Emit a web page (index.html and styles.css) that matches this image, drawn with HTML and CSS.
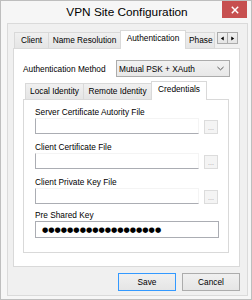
FILE: index.html
```html
<!DOCTYPE html>
<html lang="en">
<head>
	<title>VPN Site Configuration</title>
	<meta charset="utf-8">
	<link rel="stylesheet" href="styles.css">
</head>
<body>
	<section class="window">
		<header class="titleBar">
			<span class="titleText">VPN Site Configuration</span>
			<span class="closeButton">
				<svg viewBox="0 0 10 10" width="8" height="8"><line x1="1" y1="1" x2="9" y2="9"/><line x1="9" y1="1" x2="1" y2="9"/></svg>
			</span>
		</header>

		<section class="clientArea">
			<section class="tabControl">
				<div class="tabStrip">
					<div class="tab" style="width:35px;">Client</div>
					<div class="tab" style="width:73px;">Name Resolution</div>
					<div class="tab tab_selected" style="width:66px;">Authentication</div>
					<div class="tab tab_clipped" style="width:30px;">Phase</div>
					<div class="tabScroller">
						<span class="tabScroller_button"><svg viewBox="0 0 6 6" width="5" height="5"><polygon points="4.5,0.5 1,3 4.5,5.5"/></svg></span>
						<span class="tabScroller_button"><svg viewBox="0 0 6 6" width="5" height="5"><polygon points="1.5,0.5 5,3 1.5,5.5"/></svg></span>
					</div>
				</div>

				<div class="tabPanel mainPanel">
					<div class="methodRow">
						<span class="methodLabel">Authentication Method</span>
						<div class="comboBox">
							<span>Mutual PSK + XAuth</span>
							<svg viewBox="0 0 8 5" width="7" height="5"><polyline points="0.5,0.8 4,4 7.5,0.8"/></svg>
						</div>
					</div>

					<section class="tabControl innerTabs">
						<div class="tabStrip">
							<div class="tab" style="width:59px;">Local Identity</div>
							<div class="tab" style="width:69px;">Remote Identity</div>
							<div class="tab tab_selected" style="width:56px;">Credentials</div>
						</div>
						<div class="tabPanel credentialsPanel">
							<div class="field">
								<label class="fieldLabel">Server Certificate Autority File</label>
								<div class="fieldRow">
									<div class="textBox textBox_disabled"></div>
									<span class="browseButton">...</span>
								</div>
							</div>
							<div class="field">
								<label class="fieldLabel">Client Certificate File</label>
								<div class="fieldRow">
									<div class="textBox textBox_disabled"></div>
									<span class="browseButton">...</span>
								</div>
							</div>
							<div class="field">
								<label class="fieldLabel">Client Private Key File</label>
								<div class="fieldRow">
									<div class="textBox textBox_disabled"></div>
									<span class="browseButton">...</span>
								</div>
							</div>
							<div class="field field_key">
								<label class="fieldLabel">Pre Shared Key</label>
								<div class="fieldRow">
									<div class="textBox textBox_key"><span class="keyDots">●●●●●●●●●●●●●●●●●●●</span></div>
								</div>
							</div>
						</div>
					</section>
				</div>
			</section>

			<footer class="dialogButtons">
				<span class="dialogButton dialogButton_default">Save</span>
				<span class="dialogButton">Cancel</span>
			</footer>
		</section>
	</section>
</body>
</html>
```

FILE: styles.css
```css
html, body{ margin:0; padding:0; }
body{ width:252px; height:300px; overflow:hidden; font-family:"Liberation Sans", Arial, sans-serif; font-size:8.3px; color:rgb(0,0,0); }

.window{
	box-sizing:border-box;
	width:252px; height:300px;
	border:1px solid rgb(190,190,190);
	background-color:rgb(246,246,246);
	display:flex; flex-direction:column;
}

/* title bar */
.titleBar{
	height:22px; flex:none;
	display:grid; grid-template-columns:1fr auto 1fr; align-items:start;
}
.titleText{ grid-column:2; font-size:11.8px; line-height:22px; padding-left:2px; }
.closeButton{
	grid-column:3; justify-self:end;
	width:25px; height:17px; margin-right:4px;
	background-color:rgb(199,80,80);
	display:flex; align-items:center; justify-content:center;
}
.closeButton svg{ stroke:rgb(255,255,255); stroke-width:1.8; }

/* client area */
.clientArea{
	flex:1;
	margin:0 3px 3px 6px;
	border:1px solid rgb(218,218,218);
	background-color:rgb(240,240,240);
	display:flex; flex-direction:column;
}

.tabControl{ margin:6px 7px 0 5px; display:flex; flex-direction:column; }
.tabStrip{ height:18px; display:flex; align-items:flex-end; padding-left:1px; }
.tab{
	box-sizing:border-box;
	height:16px; margin-left:-1px;
	border:1px solid rgb(217,217,217); border-bottom:none;
	background:linear-gradient(rgb(240,240,240), rgb(229,229,229));
	line-height:15px; text-align:center; white-space:nowrap; overflow:hidden;
}
.tab:first-child{ margin-left:0; }
.tab_selected{
	height:19px; margin-bottom:-1px;
	background:rgb(255,255,255);
	line-height:15px;
	position:relative; z-index:1;
}
.tab_clipped{ text-align:left; padding-left:3px; }

.tabScroller{ align-self:flex-start; margin:2px 2px 0 auto; display:flex; }
.tabScroller_button{
	box-sizing:border-box;
	width:11px; height:12px; margin-left:-1px;
	border:1px solid rgb(172,172,172);
	background:linear-gradient(rgb(240,240,240), rgb(229,229,229));
	display:flex; align-items:center; justify-content:center;
}
.tabScroller_button svg{ fill:rgb(0,0,0); }

.tabPanel{
	box-sizing:border-box;
	border:1px solid rgb(217,217,217);
	background-color:rgb(255,255,255);
}
.mainPanel{ height:219px; padding:11px 10px 0 9px; }

.methodRow{ display:flex; align-items:center; height:17px; }
.methodLabel{ flex:1; }
.comboBox{
	box-sizing:border-box;
	width:114px; height:17px; margin-right:-1px;
	border:1px solid rgb(172,172,172);
	background:linear-gradient(rgb(242,242,242), rgb(232,232,232));
	display:flex; align-items:center; justify-content:space-between;
	padding:0 5px 0 2px;
}
.comboBox svg{ fill:none; stroke:rgb(80,80,80); stroke-width:1.1; }

.innerTabs{ margin:4px 0 0 0; }
.innerTabs .tabStrip{ padding-left:2px; }
.credentialsPanel{ height:154px; padding:6px 0 0 11px; }

.field{ margin-bottom:7px; }
.field_key{ margin-top:-2px; }
.fieldLabel{ display:block; height:12px; line-height:12px; }
.fieldRow{ display:flex; align-items:flex-end; }

.textBox{ box-sizing:border-box; height:16px; background-color:rgb(255,255,255); }
.textBox_disabled{
	width:164px;
	border:1px solid; border-color:rgb(244,244,244) rgb(244,244,244) rgb(171,173,179) rgb(171,173,179);
}
.textBox_key{
	width:184px; height:17px;
	border:1px solid rgb(171,173,179);
	display:flex; align-items:center; padding-left:6px;
}
.keyDots{ font-family:"DejaVu Sans", sans-serif; font-size:7.2px; line-height:8px; letter-spacing:0; }

.browseButton{
	box-sizing:border-box;
	width:14px; height:14px; margin-left:5px;
	border:1px solid rgb(220,220,220);
	background-color:rgb(244,244,244);
	color:rgb(160,160,160); font-size:7px; line-height:13px; text-align:center;
}

/* dialog buttons */
.dialogButtons{ display:flex; justify-content:flex-end; gap:6px; margin:6px 7px 0 0; }
.dialogButton{
	box-sizing:border-box;
	width:58px; height:18px;
	border:1px solid rgb(172,172,172);
	background:linear-gradient(rgb(240,240,240), rgb(229,229,229));
	line-height:16px; text-align:center;
}
.dialogButton_default{ border-color:rgb(51,153,255); }
```
